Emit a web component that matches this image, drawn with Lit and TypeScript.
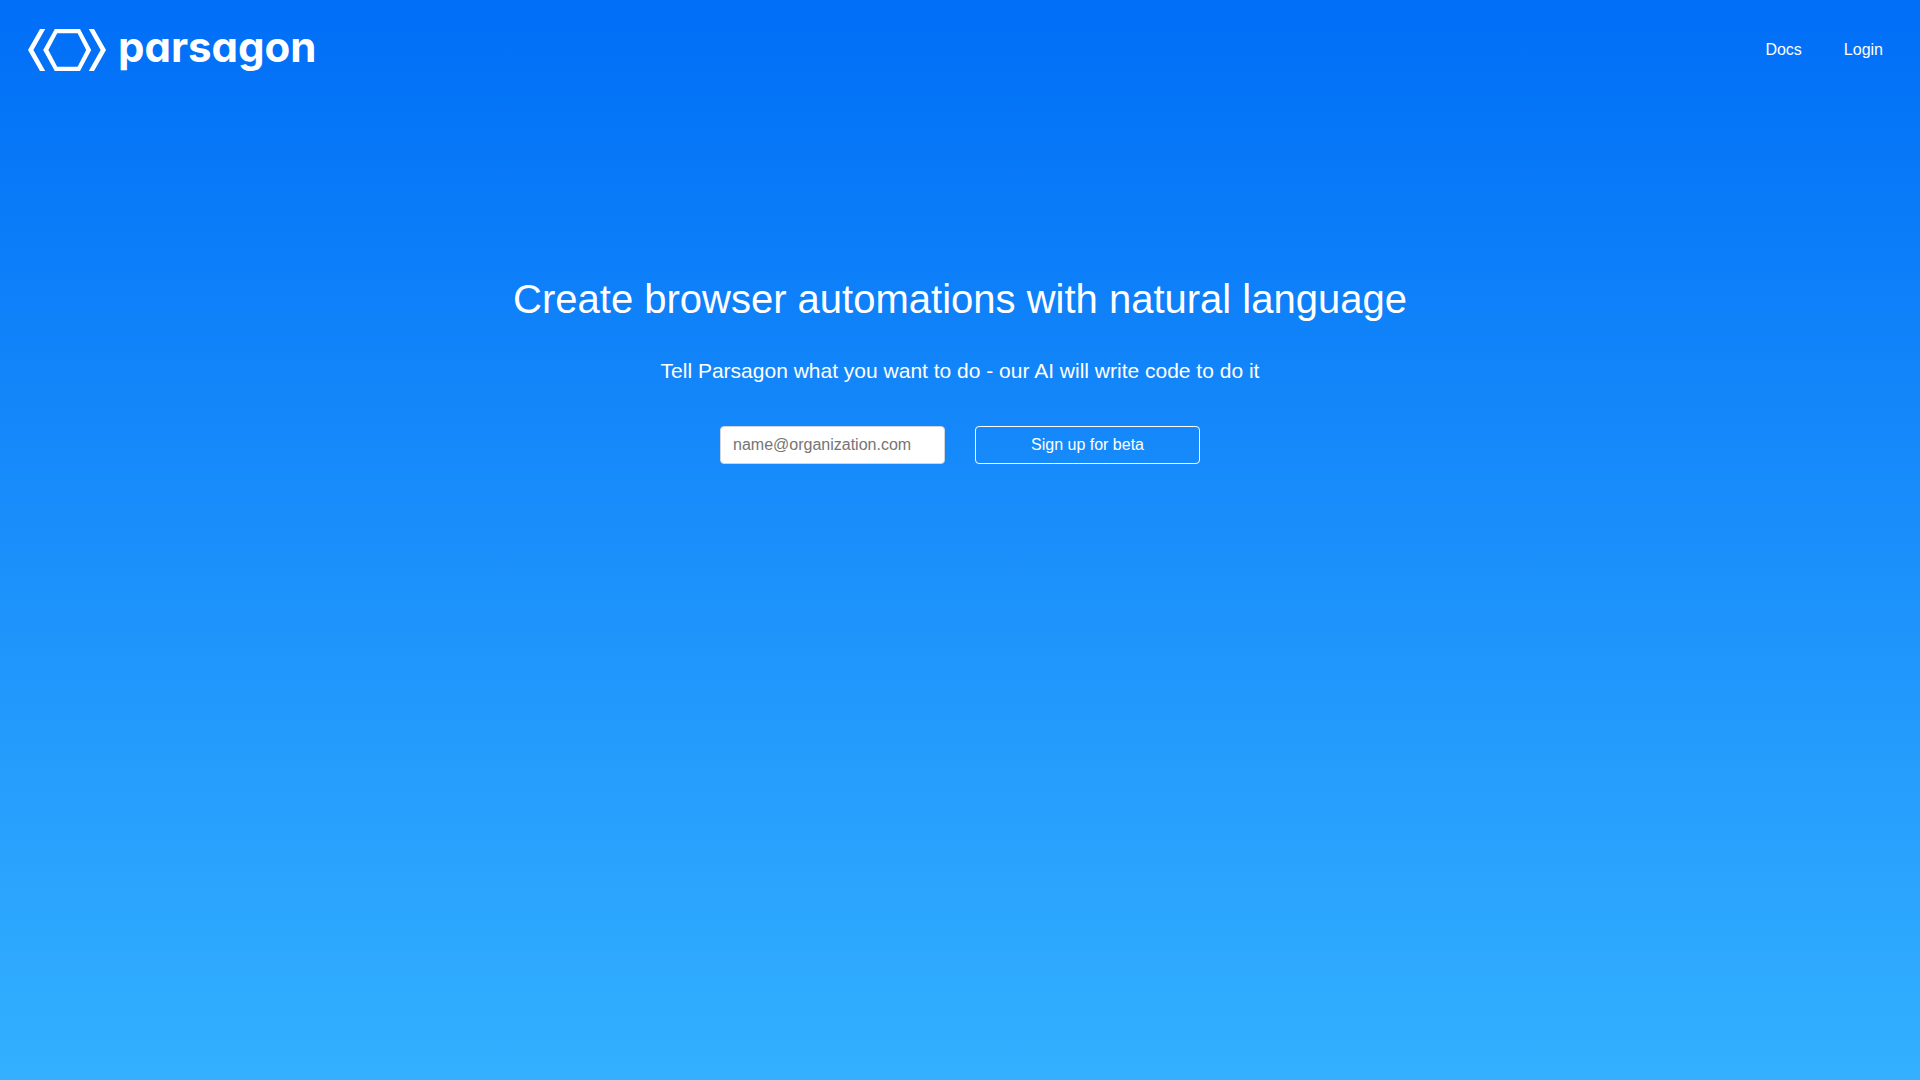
import { LitElement, html, css } from "lit";
import { customElement } from "lit/decorators.js";

@customElement("site-header")
class SiteHeader extends LitElement {
  static styles = css`
    :host {
      display: block;
    }
    .bar {
      display: flex;
      align-items: center;
      justify-content: space-between;
      min-height: 100px;
      padding: 0 37px 0 28px;
      box-sizing: border-box;
    }
    .brand {
      display: flex;
      align-items: center;
      gap: 12px;
      color: #fff;
      text-decoration: none;
    }
    .mark {
      display: block;
      width: 78px;
      height: 42px;
      fill: #fff;
    }
    .word {
      font: 700 42px/48px Inter, "Liberation Sans", sans-serif;
      font-feature-settings: "cv11" 1;
      padding-bottom: 6px;
    }
    .links {
      display: flex;
      gap: 42px;
    }
    .link {
      color: #fff;
      font-size: 16px;
      line-height: 24px;
      text-decoration: none;
    }
  `;

  render() {
    return html`
      <header class="bar">
        <a class="brand" href="#">
          <svg class="mark" viewBox="0 0 78 42" aria-hidden="true">
            <path d="M12 0h5.200L5.400 21l11.800 21H12L0 21z" />
            <path fill-rule="evenodd" d="M26.800 0h25.200L63.200 21 52 42H26.800L15.200 21zM29.200 4.200L20.400 21l8.800 16.800h20.400L58.200 21 49.600 4.200z" />
            <path d="M66 0h-5.200L72.600 21 60.800 42H66l12-21z" />
          </svg>
          <span class="word">parsagon</span>
        </a>
        <nav class="links">
          <a class="link" href="#docs">Docs</a>
          <a class="link" href="#login">Login</a>
        </nav>
      </header>
    `;
  }
}

@customElement("signup-form")
class SignupForm extends LitElement {
  static styles = css`
    :host {
      display: block;
    }
    .form {
      display: grid;
      grid-template-columns: 1fr 1fr;
      gap: 30px;
      max-width: 480px;
      margin: 0 auto;
    }
    .field,
    .submit {
      width: 100%;
      box-sizing: border-box;
      border-radius: 4px;
      font: inherit;
      font-size: 16px;
      line-height: 24px;
      padding: 6px 12px;
    }
    .field {
      border: 1px solid #ced4da;
      background: #fff;
      color: #212529;
    }
    .field::placeholder {
      color: #757575;
      opacity: 1;
    }
    .submit {
      border: 1px solid #fff;
      background: transparent;
      color: #fff;
      cursor: pointer;
    }
  `;

  render() {
    return html`
      <form class="form" @submit=${(e: Event) => e.preventDefault()}>
        <input class="field" type="email" name="email" aria-label="name@organization.com" placeholder="name@organization.com" />
        <button class="submit" type="submit">Sign up for beta</button>
      </form>
    `;
  }
}

@customElement("app-root")
class AppRoot extends LitElement {
  static styles = css`
    :host {
      display: block;
      min-height: 100vh;
      background: linear-gradient(#006ef7, #33b0ff);
      color: #fff;
      font-family: "Liberation Sans", Arial, sans-serif;
    }
    .hero {
      padding: 175px 24px 48px;
      text-align: center;
    }
    .title {
      margin: 0;
      font-size: 40px;
      line-height: 48px;
      font-weight: 400;
    }
    .lead {
      margin: 32px 0 39px;
      font-size: 21px;
      line-height: 32px;
    }
  `;

  render() {
    return html`
      <site-header></site-header>
      <main class="hero">
        <h1 class="title">Create browser automations with natural language</h1>
        <p class="lead">Tell Parsagon what you want to do - our AI will write code to do it</p>
        <signup-form></signup-form>
      </main>
    `;
  }
}
